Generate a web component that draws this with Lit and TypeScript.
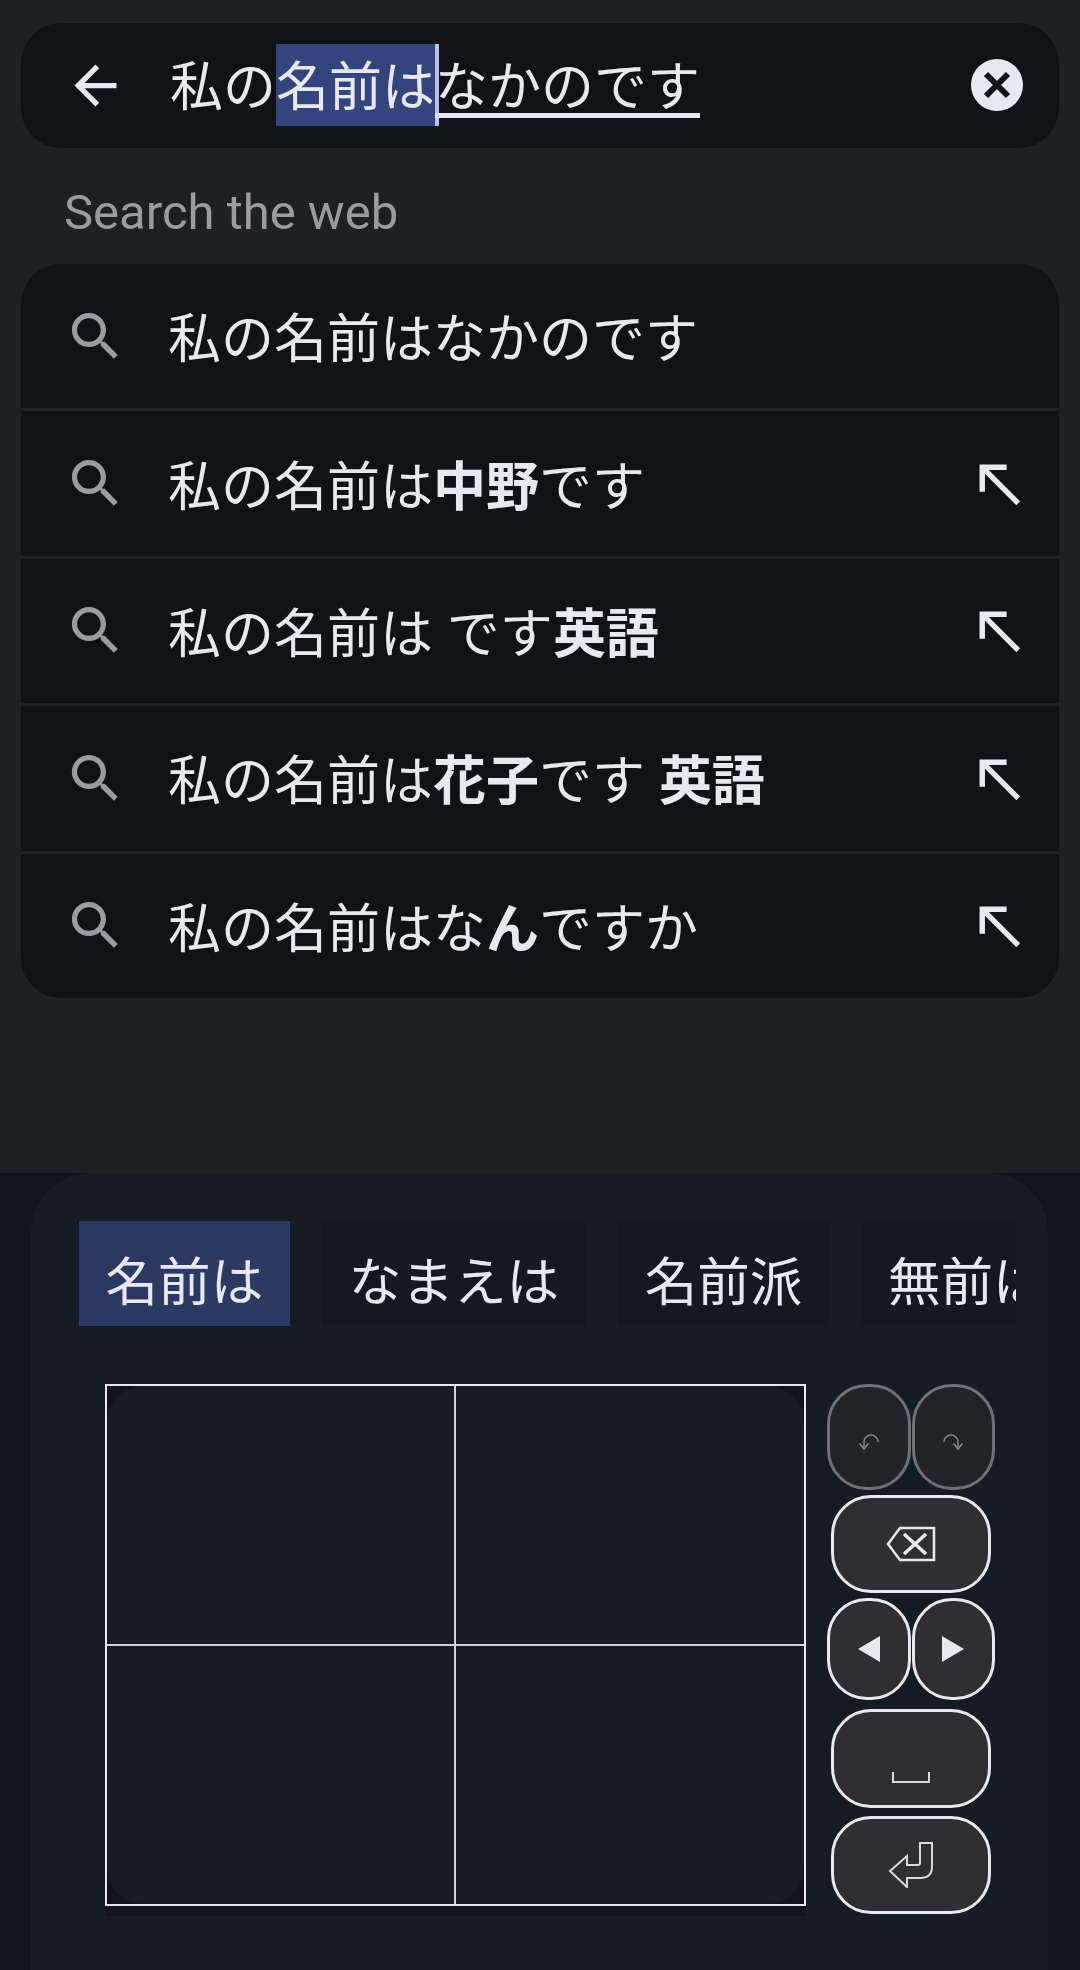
import {LitElement, html, css} from 'lit';
import {customElement} from 'lit/decorators.js';
import {map} from 'lit/directives/map.js';

type Part = [string, boolean?];

const suggestions: {parts: Part[]; fill: boolean}[] = [
  {parts: [['私の名前はなかのです']], fill: false},
  {parts: [['私の名前は'], ['中野', true], ['です']], fill: true},
  {parts: [['私の名前は です'], ['英語', true]], fill: true},
  {parts: [['私の名前は'], ['花子', true], ['です '], ['英語', true]], fill: true},
  {parts: [['私の名前はな'], ['ん', true], ['ですか']], fill: true},
];

const candidates = ['名前は', 'なまえは', '名前派', '無前は'];

const searchIcon = html`<svg class="icon search" viewBox="0 0 24 24"><path d="M15.5 14h-.79l-.28-.27C15.41 12.59 16 11.11 16 9.5 16 5.91 13.09 3 9.5 3S3 5.91 3 9.5 5.91 16 9.5 16c1.61 0 3.09-.59 4.23-1.57l.27.28v.79l5 4.99L20.49 19l-4.99-5zm-6 0C7.01 14 5 11.99 5 9.5S7.01 5 9.5 5 14 7.01 14 9.5 11.99 14 9.5 14z"/></svg>`;
const fillIcon = html`<svg class="icon fill" viewBox="0 0 24 24"><path d="M5 15h2V8.41L18.59 20 20 18.59 8.41 7H15V5H5v10z"/></svg>`;

@customElement('app-root')
export class AppRoot extends LitElement {
  static styles = css`
    :host {
      display: block;
      width: 1080px;
      height: 1970px;
      overflow: hidden;
      background: #1f2024;
      color: #e8e9ee;
      font-family: "Noto Sans CJK JP", "Roboto", sans-serif;
    }

    .top {
      height: 1173px;
      padding: 23px 21px 0;
      box-sizing: border-box;
    }

    .search-bar {
      height: 125px;
      display: flex;
      align-items: flex-start;
      background: #111216;
      border-radius: 40px;
    }

    .back {
      width: 63px;
      height: 63px;
      margin: 31px 0 0 43px;
      fill: #e8e9ee;
    }

    .query {
      display: flex;
      align-items: flex-start;
      margin: 21px 0 0 43px;
      font-size: 53px;
      line-height: 78px;
      white-space: nowrap;
    }

    .selected {
      background: #33457c;
      border-right: 4px solid #b4c2f0;
      margin-right: -4px;
      height: 82px;
    }

    .composing {
      height: 69px;
      border-bottom: 5px solid #e8e9ee;
    }

    .clear {
      width: 52px;
      height: 52px;
      margin: 36px 36px 0 auto;
    }

    .label {
      height: 116px;
      padding: 14px 0 0 43px;
      box-sizing: border-box;
      font-family: "Roboto", sans-serif;
      font-size: 49px;
      line-height: 102px;
      color: #9b9ca1;
    }

    .list {
      background: #111216;
      border-radius: 40px;
      overflow: hidden;
    }

    .row {
      height: 144.4px;
      display: flex;
      align-items: center;
      border-bottom: 3px solid #1f2024;
    }

    .row:last-child {
      border-bottom: 0;
    }

    .icon.search {
      width: 63px;
      height: 63px;
      margin-left: 43px;
      fill: #9b9ca1;
    }

    .text {
      margin: 0 0 2px 41px;
      font-size: 53px;
      white-space: pre;
      word-spacing: 2px;
    }

    .text b {
      font-weight: 700;
    }

    .icon.fill {
      width: 65px;
      height: 65px;
      margin: 0 28px 0 auto;
      fill: #e8e9ee;
    }

    .keyboard {
      height: 797px;
      background: #11141a;
      padding: 0 32px 0 31px;
    }

    .panel {
      height: 100%;
      box-sizing: border-box;
      padding-top: 48px;
      background: #161c24;
      border-radius: 60px 60px 0 0;
    }

    .candidates {
      display: flex;
      gap: 32.500px;
      width: 937px;
      height: 105px;
      margin-left: 48px;
      overflow: hidden;
    }

    .candidate {
      flex: none;
      box-sizing: border-box;
      height: 105px;
      padding: 10px 26.500px 0;
      background: #15181d;
      font-size: 52.600px;
      line-height: 95px;
      white-space: nowrap;
    }

    .candidate.active {
      background: #2c3a63;
    }

    .writing {
      display: flex;
      align-items: flex-start;
      margin: 58px 0 0 74px;
    }

    .canvas {
      width: 701px;
      height: 522px;
      box-sizing: border-box;
      border: 2px solid #e8e9ee;
      background: #11141a;
      box-shadow: 0 10px 0 #11141a;
    }

    .pad {
      height: 100%;
      display: grid;
      grid-template-columns: 349px 1fr;
      grid-template-rows: 260px 1fr;
      background: #161c24;
      border-radius: 36px;
    }

    .pad div:nth-child(odd) {
      border-right: 2px solid #d0d2d8;
    }

    .pad div:nth-child(-n + 2) {
      border-bottom: 2px solid #d0d2d8;
    }

    .keys {
      width: 168px;
      margin-left: 21px;
      display: flex;
      flex-direction: column;
      gap: 5px;
    }

    .pair {
      display: flex;
      gap: 1px;
    }

    .key {
      display: flex;
      align-items: center;
      justify-content: center;
      box-sizing: border-box;
      background: #2f2f32;
      border: 3px solid #e8e9ee;
      border-radius: 40px;
    }

    .key.half {
      width: 84px;
      height: 102px;
    }

    .key.off {
      height: 106px;
      background: #212327;
      border-color: #6f7176;
    }

    .key.wide {
      width: 160px;
      height: 98px;
      margin: 0 4px;
    }

    .key.space {
      margin-top: 4px;
      height: 99px;
    }

    .key.enter {
      margin-top: 3px;
    }

    .key svg {
      fill: none;
      stroke-linejoin: miter;
    }

    .nudge {
      margin-top: 10px;
    }

    .nudge-low {
      margin-top: 38px;
    }
  `;

  render() {
    return html`
      <div class="top">
        <div class="search-bar">
          <svg class="back" viewBox="0 0 24 24"><path d="M20 11H7.83l5.59-5.59L12 4l-8 8 8 8 1.41-1.41L7.83 13H20v-2z"/></svg>
          <div class="query"><span>私の</span><span class="selected">名前は</span><span class="composing">なかのです</span></div>
          <svg class="clear" viewBox="0 0 52 52">
            <circle cx="26" cy="26" r="26" fill="#e8e9ee"/>
            <path d="M15 15l22 22M37 15L15 37" stroke="#111216" stroke-width="6" fill="none"/>
          </svg>
        </div>
        <div class="label">Search the web</div>
        <div class="list">
          ${map(suggestions, (s) => html`<div class="row">${searchIcon}<span class="text">${map(s.parts, ([t, bold]) => bold ? html`<b>${t}</b>` : t)}</span>${s.fill ? fillIcon : ''}</div>`)}
        </div>
      </div>
      <div class="keyboard">
        <div class="panel">
          <div class="candidates">
            ${map(candidates, (c, i) => html`<div class="candidate ${i === 0 ? 'active' : ''}">${c}</div>`)}
          </div>
          <div class="writing">
            <div class="canvas">
              <div class="pad"><div></div><div></div><div></div><div></div></div>
            </div>
            <div class="keys">
              <div class="pair">
                <div class="key half off">
                  <svg class="nudge" width="22" height="18" viewBox="0 0 22 18" stroke="#8a8c91" stroke-width="1.5"><path d="M6 14V9a7 7 0 0 1 14 0"/><path d="M1.500 10.500L6 16l4.500-5.500"/></svg>
                </div>
                <div class="key half off">
                  <svg class="nudge" width="22" height="18" viewBox="0 0 22 18" stroke="#8a8c91" stroke-width="1.5"><path d="M2 9a7 7 0 0 1 14 0v5"/><path d="M11.500 10.500L16 16l4.500-5.500"/></svg>
                </div>
              </div>
              <div class="key wide">
                <svg width="50" height="36" viewBox="0 0 50 36" stroke="#e8e9ee" stroke-width="2.500"><path d="M48 2v32H14L2 18 14 2z"/><path d="M18 8l22 20M40 8L18 28" stroke-width="3.500"/></svg>
              </div>
              <div class="pair">
                <div class="key half">
                  <svg width="24" height="28" viewBox="0 0 24 28"><path d="M23 1v26L1 14z" fill="#e8e9ee"/></svg>
                </div>
                <div class="key half">
                  <svg width="24" height="28" viewBox="0 0 24 28"><path d="M1 1v26l22-13z" fill="#e8e9ee"/></svg>
                </div>
              </div>
              <div class="key wide space">
                <svg class="nudge-low" width="38" height="12" viewBox="0 0 38 12" stroke="#d8d9dd" stroke-width="2"><path d="M1 0v10h36V0"/></svg>
              </div>
              <div class="key wide enter">
                <svg width="46" height="46" viewBox="0 0 46 46" stroke="#d8d9dd" stroke-width="2"><path d="M32 1h12v24q0 11-12 11H19v9L2 29l17-15v9h11q2 0 2-2z"/></svg>
              </div>
            </div>
          </div>
        </div>
      </div>
    `;
  }
}
